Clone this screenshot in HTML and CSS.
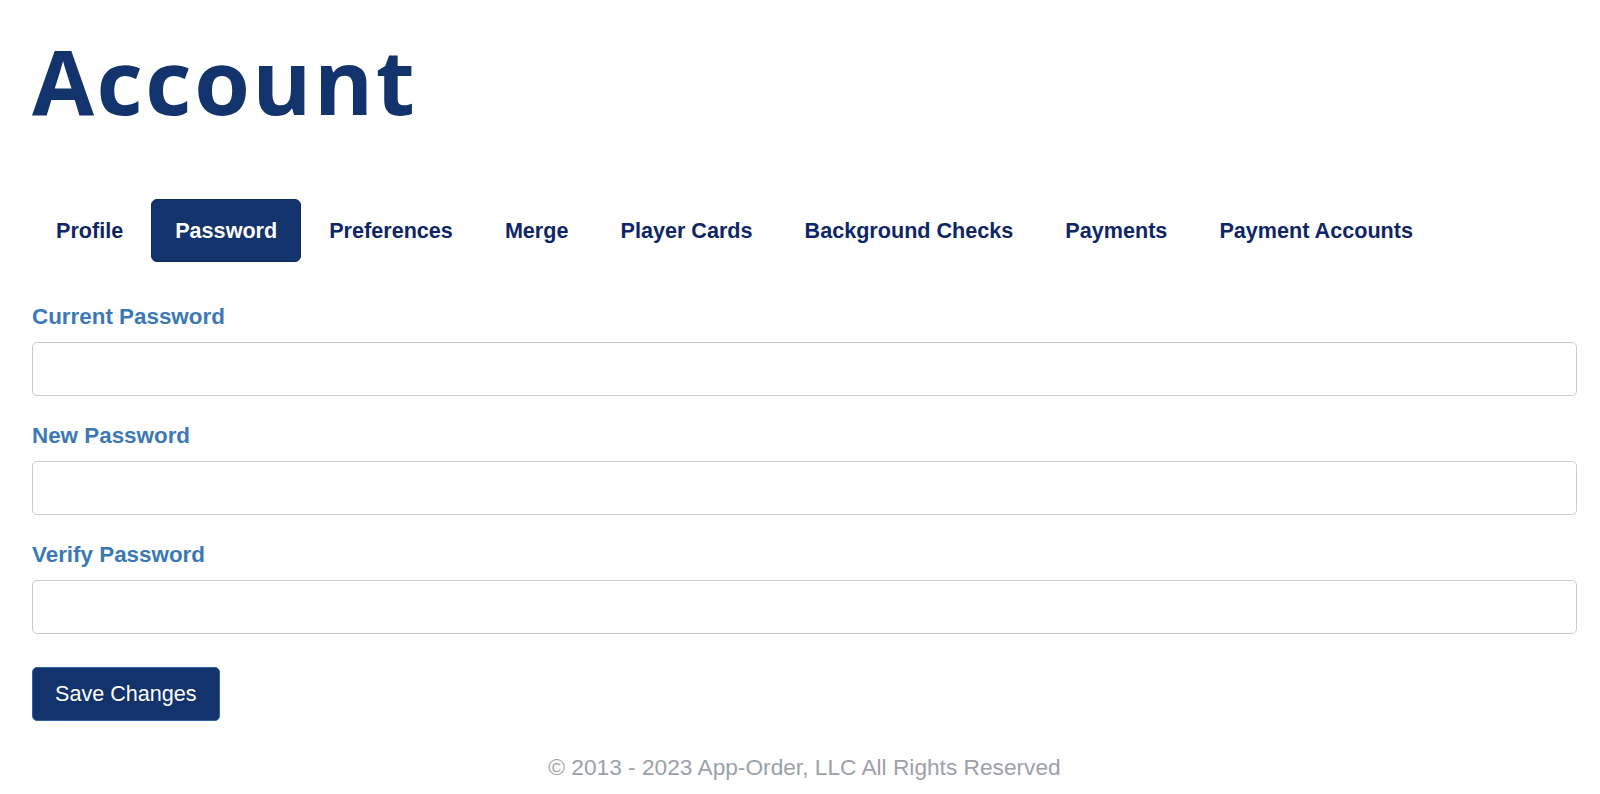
FILE: index.html
```html
<!DOCTYPE html>
<html lang="en">
<head>
    <meta charset="UTF-8">
    <title>Account</title>
    <link rel="stylesheet" href="styles.css">
</head>
<body>
    <div class="page">
        <h1 class="title">Account</h1>
        <div class="tabs">
            <a href="#">Profile</a>
            <a href="#" class="active">Password</a>
            <a href="#">Preferences</a>
            <a href="#">Merge</a>
            <a href="#">Player Cards</a>
            <a href="#">Background Checks</a>
            <a href="#">Payments</a>
            <a href="#">Payment Accounts</a>
        </div>
        <form class="form">
            <div class="group">
                <label for="cur">Current Password</label>
                <input type="password" id="cur">
            </div>
            <div class="group">
                <label for="new">New Password</label>
                <input type="password" id="new">
            </div>
            <div class="group">
                <label for="ver">Verify Password</label>
                <input type="password" id="ver">
            </div>
            <button type="button" class="btn">Save Changes</button>
        </form>
        <div class="footer">&copy; 2013 - 2023 App-Order, LLC All Rights Reserved</div>
    </div>
</body>
</html>
```
FILE: styles.css
```css
* {
    margin: 0;
    padding: 0;
    box-sizing: border-box;
}
body {
    background: #fff;
    font-family: "Liberation Sans", Arial, sans-serif;
}
.page {
    padding: 0 23px 0 32px;
}
.title {
    margin-top: 26px;
    font-family: "Open Sans", "Noto Sans", sans-serif;
    font-size: 90px;
    font-weight: 700;
    line-height: 1.2;
    letter-spacing: 2.5px;
    color: #13336c;
}
.tabs {
    display: flex;
    gap: 4px;
    margin-top: 65px;
}
.tabs>a {
    display: flex;
    align-items: center;
    height: 63px;
    padding: 0 23px;
    border-radius: 6px;
    border: 1px solid transparent;
    text-decoration: none;
    font-size: 21.6px;
    font-weight: 700;
    color: #0e2667;
}
.tabs>a.active {
    background-color: #12336b;
    border-color: #0d2a5c;
    color: #fff;
}
.form {
    margin-top: 39px;
}
.group {
    margin-bottom: 24px;
}
.group>label {
    display: block;
    font-size: 22.4px;
    font-weight: 700;
    line-height: 32px;
    color: #3b79b6;
    margin-bottom: 9px;
}
.group>input {
    display: block;
    width: 100%;
    height: 54px;
    border: 1.5px solid #cccccc;
    border-radius: 5px;
    padding: 0 16px;
    font-size: 21.6px;
    outline: none;
}
.btn {
    margin-top: 9px;
    height: 54px;
    padding: 0 22px;
    background-color: #12336b;
    border: 1.5px solid #2f62a6;
    border-radius: 5px;
    color: #fff;
    font-family: "Liberation Sans", Arial, sans-serif;
    font-size: 21.6px;
}
.footer {
    margin-top: 30px;
    text-align: center;
    font-size: 22.7px;
    line-height: 32px;
    color: #9ba1a9;
}
```
